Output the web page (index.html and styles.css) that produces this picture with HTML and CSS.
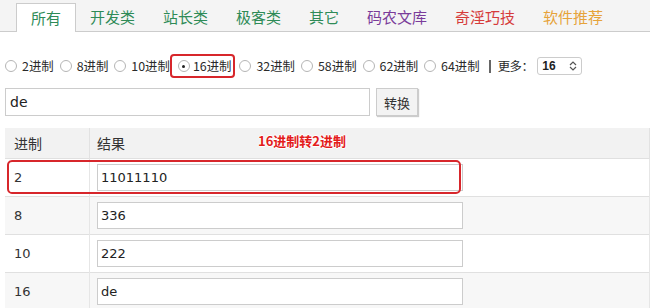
FILE: index.html
```html
<!DOCTYPE html>
<html>
<head>
  <title>进制转换</title>
  <link rel="stylesheet" href="styles.css">
</head>
<body>
  <div class="tabs">
    <a class="tab active green">所有</a>
    <a class="tab green">开发类</a>
    <a class="tab green">站长类</a>
    <a class="tab green">极客类</a>
    <a class="tab green">其它</a>
    <a class="tab purple">码农文库</a>
    <a class="tab red">奇淫巧技</a>
    <a class="tab orange">软件推荐</a>
  </div>

  <div class="radios">
    <label class="radio"><input type="radio" name="base">2进制</label>
    <label class="radio"><input type="radio" name="base">8进制</label>
    <label class="radio"><input type="radio" name="base">10进制</label>
    <label class="radio marked"><input type="radio" name="base" checked>16进制</label>
    <label class="radio"><input type="radio" name="base">32进制</label>
    <label class="radio"><input type="radio" name="base">58进制</label>
    <label class="radio"><input type="radio" name="base">62进制</label>
    <label class="radio"><input type="radio" name="base">64进制</label>
    <span class="bar"></span>
    <span class="more">更多：</span>
    <span class="select">16
      <svg class="arrows" width="8" height="10" viewBox="0 0 8 10">
        <path d="M1 4 L4 1 L7 4 M1 6 L4 9 L7 6" fill="none" stroke="#555" stroke-width="1.2"/>
      </svg>
    </span>
  </div>

  <div class="convert">
    <input class="source" type="text" value="de">
    <button class="btn">转换</button>
  </div>

  <table class="result">
    <thead>
      <tr>
        <th class="col-base">进制</th>
        <th>结果<span class="note">16进制转2进制</span></th>
      </tr>
    </thead>
    <tbody>
      <tr class="marked-row">
        <td>2</td>
        <td><input class="value" type="text" value="11011110"></td>
      </tr>
      <tr class="odd">
        <td>8</td>
        <td><input class="value" type="text" value="336"></td>
      </tr>
      <tr>
        <td>10</td>
        <td><input class="value" type="text" value="222"></td>
      </tr>
      <tr class="odd">
        <td>16</td>
        <td><input class="value" type="text" value="de"></td>
      </tr>
    </tbody>
  </table>
</body>
</html>
```

FILE: styles.css
```css
body {
  margin: 0;
  font-family: "DejaVu Sans", "Noto Sans CJK SC", sans-serif;
  font-size: 13px;
  color: #333;
  background-color: white;
}
.tabs {
  display: flex;
  height: 28px;
  padding: 3px 0 0 16px;
  background-color: #f4f4f4;
  border-bottom: 1px solid #ccc;
}
.tab {
  padding: 0 14px;
  line-height: 28px;
  font-size: 15px;
  font-family: "Noto Sans CJK SC", sans-serif;
}
.tab.active {
  background-color: white;
  border: 1px solid #ccc;
  border-bottom: none;
  height: 29px;
  margin-bottom: -1px;
  line-height: 27px;
  box-sizing: border-box;
}
.green { color: #2e8b57; }
.purple { color: #7a3c9a; }
.red { color: #d63b3b; }
.orange { color: #e6a33a; }

/* 进制选择 */
.radios {
  display: flex;
  align-items: center;
  height: 24px;
  margin: 22px 0 0 5px;
  font-family: "Noto Sans CJK SC", sans-serif;
  font-size: 12.4px;
  color: #2a2a2a;
}
.radio {
  display: flex;
  align-items: center;
  gap: 5px;
  margin-right: 6px;
  height: 24px;
}
.radio input {
  appearance: none;
  width: 12px;
  height: 12px;
  margin: 0;
  border: 1px solid #b5b5b5;
  border-radius: 50%;
  background-color: white;
  display: grid;
  place-items: center;
}
.radio input:checked::after {
  content: "";
  width: 3px;
  height: 3px;
  border-radius: 50%;
  background-color: #222;
}
.radio.marked {
  gap: 3px;
  border: 2px solid #d7262b;
  border-radius: 4px;
  padding: 0 2px 0 6px;
  height: 20px;
  margin: 0 4px 0 -6px;
}
.bar {
  width: 2px;
  height: 13px;
  margin: 0 7px 0 3px;
  background-color: #666;
}
.more {
  letter-spacing: -0.5px;
}
.select {
  display: flex;
  align-items: center;
  justify-content: space-between;
  box-sizing: border-box;
  width: 45px;
  height: 18px;
  margin-left: 4px;
  padding: 0 4px 0 4px;
  border: 1px solid #ccc;
  border-radius: 3px;
  font: bold 12px "Liberation Sans", sans-serif;
  color: #222;
}

/* 输入 */
.convert {
  display: flex;
  gap: 6px;
  margin: 10px 0 0 5px;
}
.source {
  width: 365px;
  height: 28px;
  box-sizing: border-box;
  border: 1px solid #ccc;
  padding: 0 4px;
  font: 14px "DejaVu Sans", sans-serif;
  color: #222;
}
.btn {
  width: 42px;
  height: 28px;
  border: 1px solid #ccc;
  background-color: #f3f3f3;
  box-shadow: 1px 1px 1px rgba(0,0,0,0.2);
  font: 13px "Noto Sans CJK SC", sans-serif;
  color: #333;
  padding: 0;
}

/* 结果表格 */
.result {
  margin: 12px 0 0 5px;
  width: 645px;
  border-collapse: collapse;
}
.result th {
  height: 30px;
  line-height: 20px;
  text-align: left;
  font-weight: normal;
  font-family: "Noto Sans CJK SC", sans-serif;
  font-size: 14px;
  padding: 0 0 0 7px;
  background-color: #f2f2f2;
  border-right: 1px solid #e2e2e2;
  position: relative;
}
.result th.col-base {
  width: 75px;
  padding-left: 9px;
}
.result td {
  height: 37px;
  line-height: 20px;
  padding: 0 0 0 7px;
  border-top: 1px solid #e0e0e0;
  border-right: 1px solid #e6e6e6;
}
.result td:first-child {
  padding-left: 9px;
}
.result tr.odd td {
  background-color: #f7f7f7;
}
.value {
  width: 366px;
  height: 27px;
  box-sizing: border-box;
  border: 1px solid #ccc;
  padding: 0 3px;
  font: 13px "DejaVu Sans", sans-serif;
  color: #222;
}
.note {
  position: absolute;
  left: 168px;
  top: 3px;
  color: #e31b1b;
  font-weight: bold;
  font-size: 13px;
  text-shadow: 1px 0 0 white, -1px 0 0 white, 0 1px 0 white, 0 -1px 0 white;
}
.marked-row td:first-child {
  position: relative;
}
.marked-row td:first-child::after {
  content: "";
  position: absolute;
  left: 2px;
  top: 1px;
  width: 450px;
  height: 30px;
  border: 2px solid #d7262b;
  border-radius: 5px;
  pointer-events: none;
}
```
